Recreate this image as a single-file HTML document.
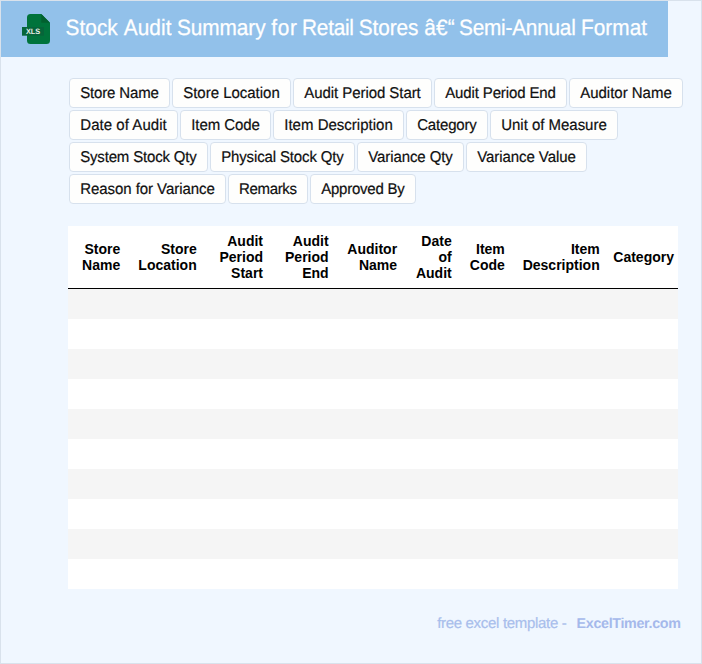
<!DOCTYPE html>
<html><head><meta charset="utf-8">
<title>Stock Audit Summary for Retail Stores</title>
<style>
*{box-sizing:border-box;margin:0;padding:0}
html,body{width:702px;height:664px;overflow:hidden}
body{font-family:"Liberation Sans",sans-serif;background:#f0f7ff;position:relative;text-rendering:geometricPrecision}
#frame{position:absolute;left:0;top:0;width:702px;height:664px;border:1px solid #d9e2ec;background:#f0f7ff}
#hdr{position:absolute;left:1px;top:1px;width:667px;height:56px;background:#92c1ea}
#title{position:absolute;left:0;top:15.3px;width:667px;height:26px;font-size:20.8px;line-height:26px;color:#fff;white-space:nowrap;-webkit-text-stroke:0.25px #fff}
#title span{position:absolute;top:0;transform:scaleY(1.065);transform-origin:50% 72%}
#icon{position:absolute;left:20px;top:12px}
.tag{position:absolute;height:30px;border:1px solid #d7e1ed;border-radius:4px;background:#fefefd;font-size:15px;line-height:28px;text-align:center;color:#101010;white-space:nowrap;-webkit-text-stroke:0.2px #101010}
.tag span{display:inline-block;position:relative;top:0.6px;transform:scaleY(1.04);transform-origin:50% 72%}
#tbl{position:absolute;left:68px;top:226px;width:610px;height:363px;background:#fff;overflow:hidden}
#thead{position:absolute;left:0;top:0;width:610px;height:63px;border-bottom:1px solid #000}
.th{text-rendering:auto;position:absolute;top:0;height:62px;display:flex;align-items:center;font-weight:bold;font-size:14px;line-height:16px;text-align:right;color:#000;white-space:nowrap}
.row{position:absolute;left:0;width:610px;height:30px;background:#f5f5f5}
#foot{position:absolute;left:437.16px;top:614.5px;font-size:15px;line-height:18px;color:#a8beec;white-space:nowrap}
#f1{letter-spacing:-0.315px;-webkit-text-stroke:0.2px #a8beec}
#f2{position:absolute;left:139.46px;top:0;font-size:14.3px;font-weight:bold;color:#a5b9eb;letter-spacing:-0.329px}
</style></head><body>
<div id="frame"></div>
<div id="hdr">
<svg id="icon" width="32" height="34" viewBox="0 0 32 34"><path d="M9.5 1h10.8l8.7 8.7V27.5a3.5 3.5 0 0 1-3.5 3.5H9.5a3.5 3.5 0 0 1-3.5-3.5V4.5a3.5 3.5 0 0 1 3.5-3.5z" fill="#00733b"/><path d="M20.3 1v8.7H29z" fill="#02602f"/><rect x="1" y="14" width="22" height="8.7" fill="#06653a"/><text x="4.9" y="21.3" font-size="7.8" font-weight="bold" fill="#e6eee6" textLength="14.3" lengthAdjust="spacingAndGlyphs" font-family="Liberation Sans, sans-serif">XLS</text></svg>
<div id="title"><span id="w0" style="left:64.50px;letter-spacing:0.062px">Stock</span> <span id="w1" style="left:122.83px;letter-spacing:0.045px">Audit</span> <span id="w2" style="left:175.93px;letter-spacing:-0.053px">Summary</span> <span id="w3" style="left:270.15px;letter-spacing:0.741px">for</span> <span id="w4" style="left:301.09px;letter-spacing:-0.260px">Retail</span> <span id="w5" style="left:357.72px;letter-spacing:-0.097px">Stores</span> <span id="w6" style="left:423.15px;letter-spacing:0.300px">â€“</span> <span id="w7" style="left:458.06px;letter-spacing:-0.235px">Semi-Annual</span> <span id="w8" style="left:579.91px;letter-spacing:0.066px">Format</span></div>
</div>
<div id="tags">
<div class="tag" style="left:69.0px;top:78px;width:101.0px"><span style="letter-spacing:-0.155px;margin-right:0.155px">Store Name</span></div>
<div class="tag" style="left:172.0px;top:78px;width:119.0px"><span style="letter-spacing:-0.017px;margin-right:0.017px">Store Location</span></div>
<div class="tag" style="left:293.0px;top:78px;width:139.0px"><span style="letter-spacing:-0.059px;margin-right:0.059px">Audit Period Start</span></div>
<div class="tag" style="left:434.0px;top:78px;width:133.0px"><span style="letter-spacing:-0.130px;margin-right:0.130px">Audit Period End</span></div>
<div class="tag" style="left:569.0px;top:78px;width:114.0px"><span style="letter-spacing:-0.018px;margin-right:0.018px">Auditor Name</span></div>
<div class="tag" style="left:69.0px;top:110px;width:109.0px"><span style="letter-spacing:0.046px;margin-right:-0.046px">Date of Audit</span></div>
<div class="tag" style="left:180.0px;top:110px;width:91.0px"><span style="letter-spacing:-0.078px;margin-right:0.078px">Item Code</span></div>
<div class="tag" style="left:273.0px;top:110px;width:131.0px"><span style="letter-spacing:0.008px;margin-right:-0.008px">Item Description</span></div>
<div class="tag" style="left:406.0px;top:110px;width:82.0px"><span style="letter-spacing:-0.172px;margin-right:0.172px">Category</span></div>
<div class="tag" style="left:490.0px;top:110px;width:128.0px"><span style="letter-spacing:-0.026px;margin-right:0.026px">Unit of Measure</span></div>
<div class="tag" style="left:69.0px;top:142px;width:139.0px"><span style="letter-spacing:-0.169px;margin-right:0.169px">System Stock Qty</span></div>
<div class="tag" style="left:210.0px;top:142px;width:145.0px"><span style="letter-spacing:-0.141px;margin-right:0.141px">Physical Stock Qty</span></div>
<div class="tag" style="left:357.0px;top:142px;width:107.0px"><span style="letter-spacing:-0.091px;margin-right:0.091px">Variance Qty</span></div>
<div class="tag" style="left:466.0px;top:142px;width:121.0px"><span style="letter-spacing:-0.073px;margin-right:0.073px">Variance Value</span></div>
<div class="tag" style="left:69.0px;top:174px;width:157.0px"><span style="letter-spacing:-0.060px;margin-right:0.060px">Reason for Variance</span></div>
<div class="tag" style="left:228.0px;top:174px;width:80.0px"><span style="letter-spacing:-0.359px;margin-right:0.359px">Remarks</span></div>
<div class="tag" style="left:310.0px;top:174px;width:106.0px"><span style="letter-spacing:-0.217px;margin-right:0.217px">Approved By</span></div>
</div>
<div id="tbl">
<div id="thead">
<div class="th" style="right:557.8px"><span>Store<br>Name</span></div>
<div class="th" style="right:481.3px"><span>Store<br>Location</span></div>
<div class="th" style="right:415.0px"><span>Audit<br>Period<br>Start</span></div>
<div class="th" style="right:349.4px"><span>Audit<br>Period<br>End</span></div>
<div class="th" style="right:280.9px"><span>Auditor<br>Name</span></div>
<div class="th" style="right:226.3px"><span>Date<br>of<br>Audit</span></div>
<div class="th" style="right:173.2px"><span>Item<br>Code</span></div>
<div class="th" style="right:78.3px"><span>Item<br>Description</span></div>
<div class="th" style="right:4.0px"><span>Category</span></div>
</div>
<div class="row" style="top:63px"></div>
<div class="row" style="top:123px"></div>
<div class="row" style="top:183px"></div>
<div class="row" style="top:243px"></div>
<div class="row" style="top:303px"></div>
</div>
<div id="foot"><span id="f1">free excel template -</span> <b id="f2">ExcelTimer.com</b></div>
</body></html>
